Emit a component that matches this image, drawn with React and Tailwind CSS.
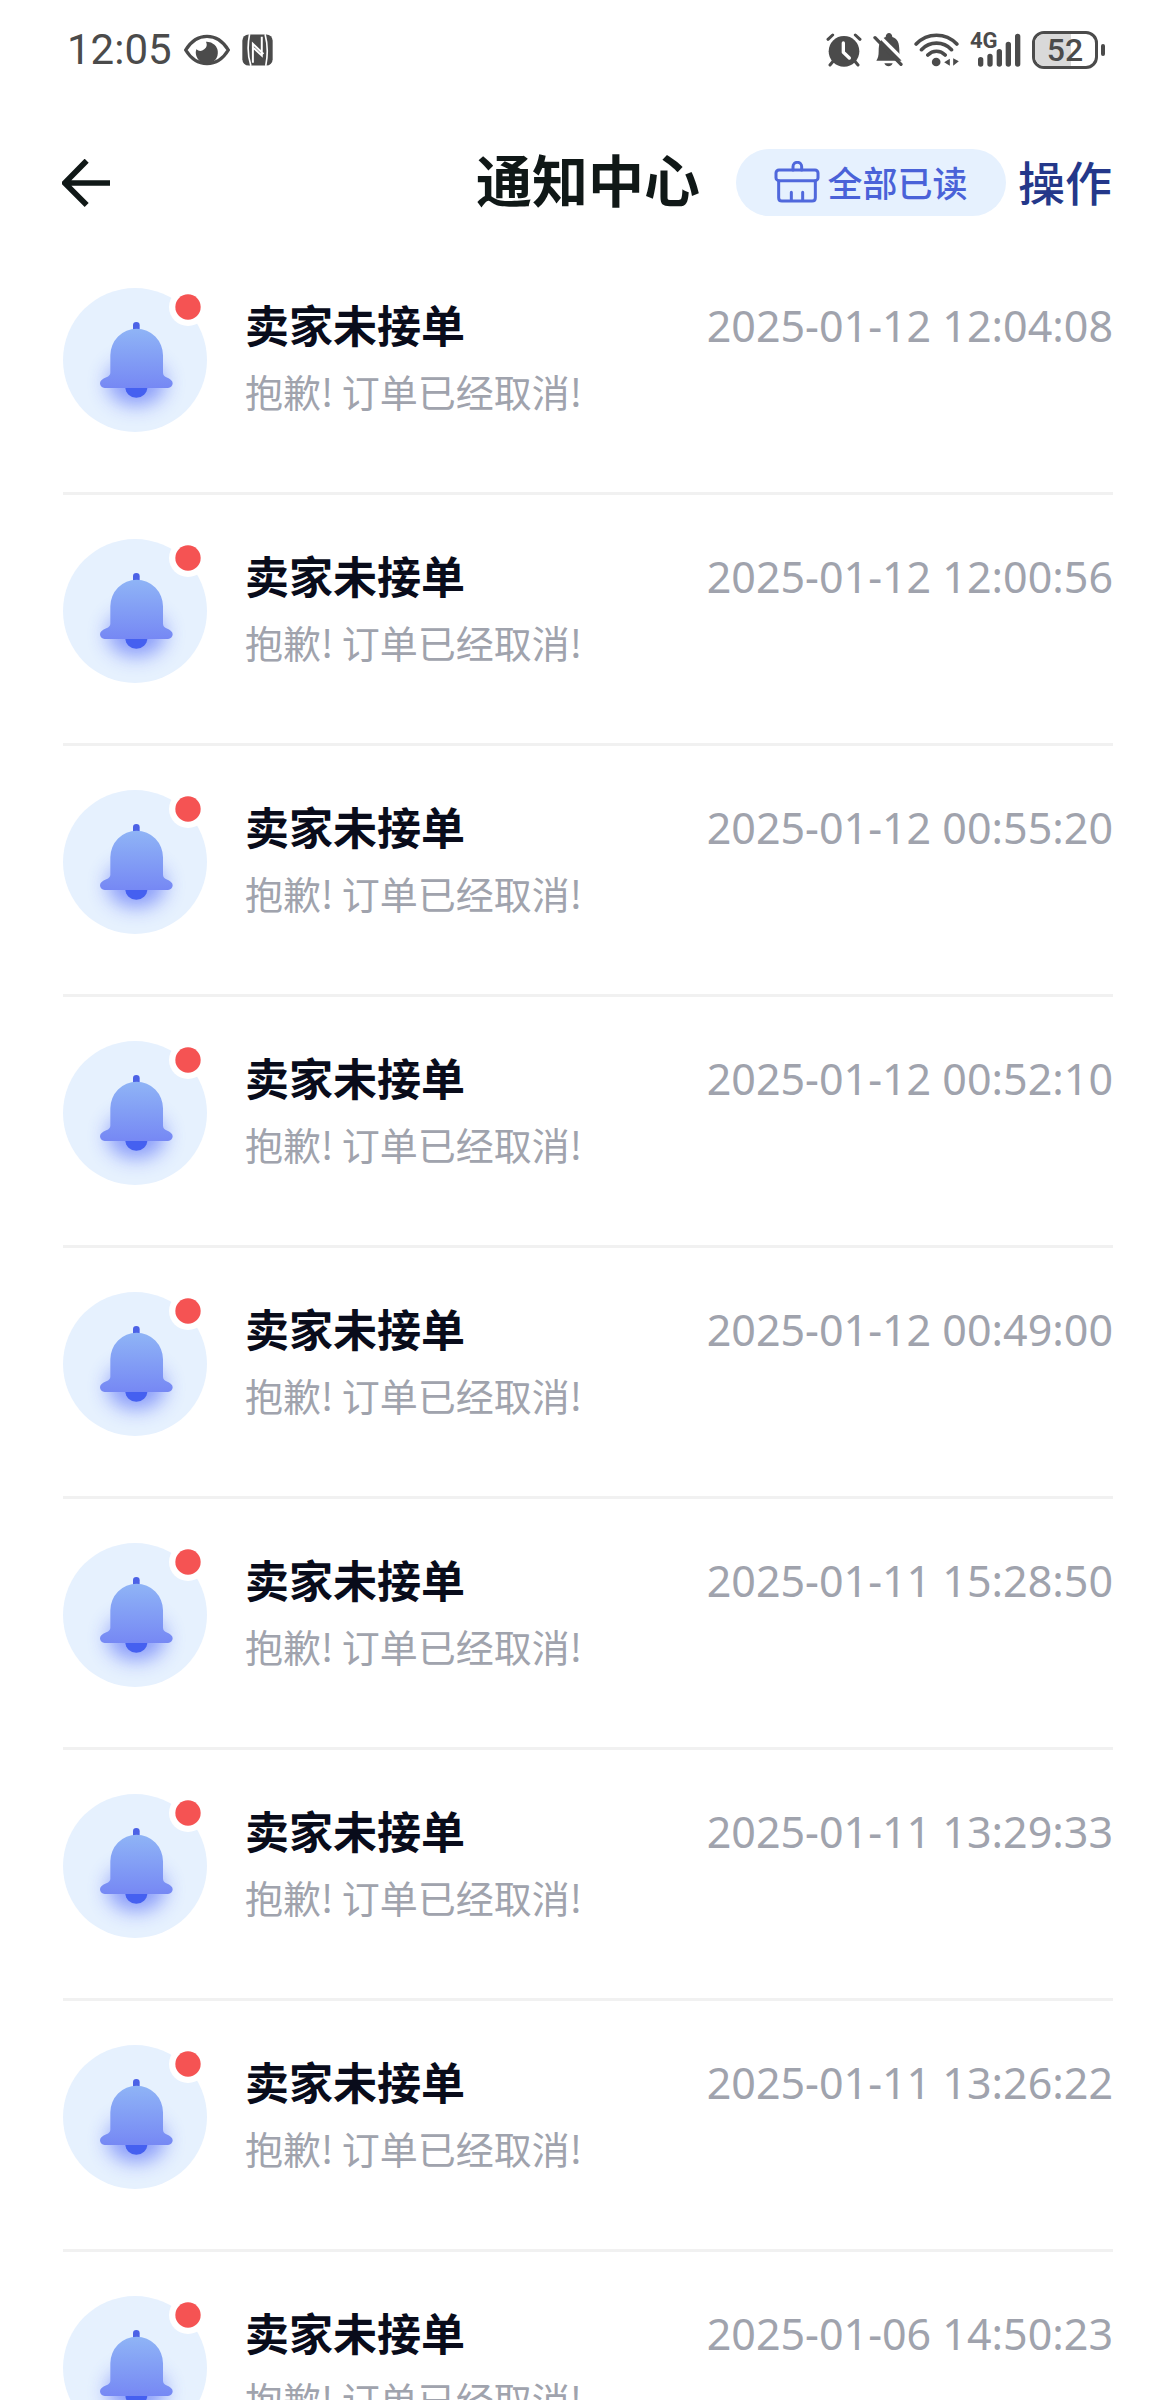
import React, { useId } from 'react';

const notifications = [
  { id: 1, time: '2025-01-12 12:04:08' },
  { id: 2, time: '2025-01-12 12:00:56' },
  { id: 3, time: '2025-01-12 00:55:20' },
  { id: 4, time: '2025-01-12 00:52:10' },
  { id: 5, time: '2025-01-12 00:49:00' },
  { id: 6, time: '2025-01-11 15:28:50' },
  { id: 7, time: '2025-01-11 13:29:33' },
  { id: 8, time: '2025-01-11 13:26:22' },
  { id: 9, time: '2025-01-06 14:50:23' },
];

const EyeIcon = () => (
  <svg viewBox="0 0 138 96" className="w-[46px] h-8" fill="none">
    <path d="M5 48C22 20 44 7 69 7s47 13 64 41C116 76 94 89 69 89S22 76 5 48Z" stroke="#4b4b4b" strokeWidth="10" strokeLinejoin="round" />
    <path d="M66 23A33 33 0 1 1 37 46A19 19 0 0 0 66 23Z" fill="#4b4b4b" />
  </svg>
);

const NfcIcon = () => (
  <svg viewBox="0 0 94 96" className="w-[31px] h-8">
    <rect x="1" y="1" width="92" height="94" rx="19" fill="#4b4b4b" />
    <path d="M23 0C17 30 17 66 27 96M70 0c8 30 8 66 2 96" stroke="#fff" strokeWidth="5" fill="none" />
    <path d="M33 87V29l32 31M60 8v57L33 40" stroke="#fff" strokeWidth="6" fill="none" />
  </svg>
);

const AlarmIcon = () => (
  <svg viewBox="0 0 108 102" className="w-9 h-[34px]" fill="none" strokeLinecap="round">
    <circle cx="54" cy="55" r="46" fill="#4b4b4b" />
    <path d="M6 19 20 6M102 19 88 6M22 84 12 96M86 84l10 12" stroke="#4b4b4b" strokeWidth="9" />
    <path d="M52 30v28l18 17" stroke="#fff" strokeWidth="10" strokeLinejoin="round" />
  </svg>
);

const BellOffIcon = () => (
  <svg viewBox="0 0 90 102" className="w-[30px] h-[34px]">
    <path d="M10 83c5-7 7-14 7-28 0-25 6-38 21-43 1-16 19-16 20 0 16 5 21 18 21 40 0 16 2 22 7 31Z" fill="#4b4b4b" />
    <path d="M34 91h25c-4 12-21 12-25 0Z" fill="#4b4b4b" />
    <path d="M12 2l80 80" stroke="#fff" strokeWidth="10" />
    <path d="M6 14l78 80" stroke="#4b4b4b" strokeWidth="10" strokeLinecap="round" />
  </svg>
);

const WifiIcon = () => (
  <svg viewBox="0 0 134 102" className="w-[45px] h-[34px]" fill="none" stroke="#4b4b4b" strokeWidth="11" strokeLinecap="round">
    <path d="M6 33c34-35 88-35 122 0M22 50c25-26 65-26 90 0M41 66c15-15 37-15 52 0" />
    <circle cx="66" cy="87" r="13" fill="#4b4b4b" stroke="none" />
    <path d="M90 88l17-11v21ZM134 85l-17-9v22Z" fill="#4b4b4b" stroke="none" />
  </svg>
);

const SignalIcon = () => (
  <div className="relative w-[51px] h-[34px]">
    <span className="absolute left-0 top-0 text-[22px] leading-4 font-bold">4G</span>
    <svg viewBox="0 0 153 102" className="w-full h-full" stroke="#4b4b4b" strokeWidth="16" strokeLinecap="round">
      <path d="M32 80v13M60 70v23M88 56v37M115 34v59M143 10v83" />
    </svg>
  </div>
);

const Battery = ({ level }) => (
  <div className="flex items-center gap-[3px]">
    <div className="relative w-[66px] h-[38px] rounded-[12px] border-[3px] border-[#4b4b4b] overflow-hidden flex items-center justify-center">
      <div className="absolute inset-y-0 left-0 bg-[#d9d9d9]" style={{ width: `${level + 8}%` }} />
      <span className="relative text-[32px] leading-8 font-medium">{level}</span>
    </div>
    <div className="w-1 h-3 rounded-full bg-[#4b4b4b]" />
  </div>
);

const StatusBar = () => (
  <div className="flex items-center justify-between pl-[67px] pr-[71px] h-[100px] text-[#4b4b4b] font-[Roboto,sans-serif]">
    <div className="flex items-center gap-3">
      <span className="text-[42px] leading-[50px]">12:05</span>
      <EyeIcon />
      <NfcIcon />
    </div>
    <div className="flex items-center gap-[11px]">
      <AlarmIcon />
      <BellOffIcon />
      <WifiIcon />
      <SignalIcon />
      <Battery level={52} />
    </div>
  </div>
);

const BroomIcon = () => (
  <svg viewBox="0 0 138 126" className="w-[46px] h-[42px]" fill="none" stroke="#5068dc" strokeWidth="9" strokeLinecap="round" strokeLinejoin="round">
    <path d="M57 27V17a13 13 0 0 1 26 0v10" />
    <rect x="6" y="27" width="126" height="32" rx="9" />
    <path d="M14 59v51q0 10 10 10h90q10 0 10-10V59M52 94v24M86 94v24" />
  </svg>
);

const Header = () => (
  <header className="grid grid-cols-[1fr_auto_1fr] items-center px-[62px] pt-[49px] pb-7">
    <button type="button" aria-label="返回" className="w-12 h-12">
      <svg viewBox="0 0 144 144" className="w-12 h-12" fill="none" stroke="#101817" strokeWidth="17">
        <path d="M144 72H14M74 5 8 72l66 66" />
      </svg>
    </button>
    <h1 className="pb-2.5 text-[56px] leading-[56px] font-bold text-[#101817]">通知中心</h1>
    <div className="flex items-center justify-end gap-3 pr-0.5">
      <button type="button" className="flex items-center justify-center gap-[7px] w-[270px] h-[67px] pb-0.5 rounded-full bg-[#e6f1fe] text-[35px] leading-10 font-medium text-[#4a62d8]">
        <BroomIcon />
        全部已读
      </button>
      <button type="button" className="pb-1 text-[47px] leading-[56px] font-medium text-[#24388a]">操作</button>
    </div>
  </header>
);

const BellAvatar = () => {
  const id = useId();

  return (
    <svg viewBox="0 0 432 432" className="w-36 h-36 shrink-0">
      <defs>
        <linearGradient id={`${id}-body`} x1="0" y1="0" x2="0" y2="1">
          <stop offset="0" stopColor="#8fb4f6" />
          <stop offset="1" stopColor="#7688f4" />
        </linearGradient>
        <filter id={`${id}-blur`} x="-60%" y="-60%" width="220%" height="220%">
          <feGaussianBlur stdDeviation="28" />
        </filter>
        <clipPath id={`${id}-clip`}>
          <circle cx="216" cy="216" r="216" />
        </clipPath>
      </defs>
      <circle cx="216" cy="216" r="216" fill="#e6f1fe" />
      <g clipPath={`url(#${id}-clip)`}>
        <ellipse cx="220" cy="285" rx="88" ry="68" fill="#4f66f8" opacity="0.6" filter={`url(#${id}-blur)`} />
      </g>
      <path d="M210 130v-18a10 10 0 0 1 20 0v18Z" fill="#4c62e6" />
      <path d="M187 298a33 31 0 0 0 66 0Z" fill="#4560f0" />
      <path
        d="M142 202a79 80 0 0 1 158 0v52c0 6 4 11 10 14 12 5 19 10 19 18 0 8-6 14-14 14H125c-8 0-14-6-14-14 0-8 7-13 19-18 8-4 12-8 12-14Z"
        fill={`url(#${id}-body)`}
      />
      {/* unread dot */}
      <circle cx="375" cy="57" r="57" fill="#fff" />
      <circle cx="375" cy="57" r="38" fill="#f55353" />
    </svg>
  );
};

const NotificationItem = ({ time }) => (
  <li className="flex gap-[38px] pt-11 pb-[60px] border-b-[3px] border-[#f1f1f1]">
    <BellAvatar />
    <div className="flex-1 pt-2">
      <div className="flex items-start justify-between">
        <h2 className="text-[44px] leading-[56px] font-bold text-[#090c1b]">卖家未接单</h2>
        <time className="text-[43px] leading-[60px] text-[#a0a3ad] font-['Noto_Sans',sans-serif]">{time}</time>
      </div>
      <p className="mt-2.5 text-[38px] leading-[50px] text-[#a0a3ad]">抱歉! 订单已经取消!</p>
    </div>
  </li>
);

const App = () => (
  <div className="h-screen overflow-hidden bg-white font-['Noto_Sans_CJK_SC',sans-serif]">
    <StatusBar />
    <Header />
    <ul className="px-[63px]">
      {notifications.map(item => (
        <NotificationItem key={item.id} time={item.time} />
      ))}
    </ul>
  </div>
);

export default App;
